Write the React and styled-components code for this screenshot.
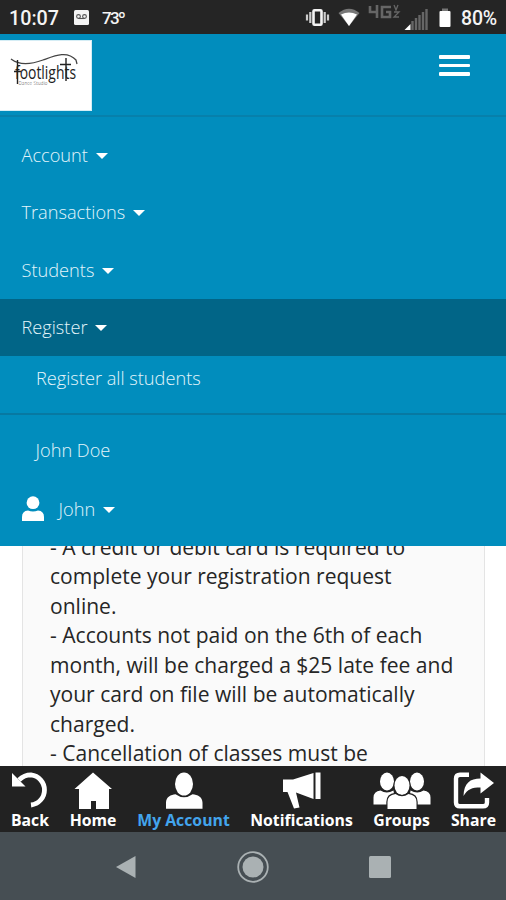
import styled, { createGlobalStyle } from "styled-components";

const GlobalStyle = createGlobalStyle`
  * {
    box-sizing: border-box;
  }

  body {
    margin: 0;
    background: #fff;
    font-family: "Open Sans", "Noto Sans", sans-serif;
  }

  svg {
    display: block;
    flex: none;
  }
`;

const Screen = styled.div`
  display: flex;
  flex-direction: column;
  width: 506px;
  height: 900px;
  overflow: hidden;
`;

const StatusBar = styled.div`
  display: flex;
  justify-content: space-between;
  flex: none;
  height: 34px;
  padding: 0 8px 0 9px;
  background: #252525;
  color: #f4f4f4;
  font-family: Roboto, sans-serif;
  font-weight: 500;
  line-height: 37px;
`;

const StatusGroup = styled.div`
  display: flex;
`;

const Clock = styled.span`
  width: 65px;
  font-size: 19.7px;
`;

const Temperature = styled.span`
  margin-left: 13px;
  font-size: 17px;
  letter-spacing: -1.7px;
`;

const Battery = styled.span`
  width: 37px;
  margin-left: 10px;
  font-size: 19.5px;
  letter-spacing: -0.2px;
`;

const Menu = styled.nav`
  flex: none;
  height: 512px;
  background: #018dbd;
  color: #e4f5fb;
  font-size: 18.2px;
  font-weight: 300;
`;

const Header = styled.div`
  display: flex;
  justify-content: space-between;
  height: 83px;
  padding: 6px 36px 0 0;
  border-bottom: 2px solid #0780ab;
`;

const Logo = styled.div`
  width: 92px;
  height: 71px;
  background: #fff;
  border: 1px solid #d5edf5;
  border-left: 0;
`;

const MenuButton = styled.button`
  display: flex;
  flex-direction: column;
  gap: 5px;
  width: 31px;
  height: 22px;
  margin-top: 15px;
  padding: 0;
  border: 0;
  background: none;

  span {
    height: 3.5px;
    border-radius: 1px;
    background: #fff;
  }
`;

const MenuList = styled.div`
  padding-top: 9px;
`;

const MenuItem = styled.div`
  display: flex;
  align-items: center;
  height: ${(props) => props.$height || 57.5}px;
  padding-left: ${(props) => props.$indent || 21.5}px;
  padding-bottom: ${(props) => props.$lift || 0}px;
  background: ${(props) => (props.$active ? "#016587" : "transparent")};
  border-bottom: ${(props) => (props.$divider ? "2px solid #0779a2" : "0")};
`;

const Caret = styled.span`
  margin: 2px 0 0 8px;
  border: 6px solid transparent;
  border-top: 6px solid #fff;
  border-bottom: 0;
`;

const UserName = styled.span`
  margin-left: 15px;
`;

const Content = styled.main`
  display: flex;
  flex: none;
  height: 220px;
  padding: 0 21px 0 22px;
  overflow: hidden;
`;

const Card = styled.div`
  flex: 1;
  padding-left: 27px;
  background: #fafafa;
  border: solid #e4e4e4;
  border-width: 0 1px;
  color: #262626;
`;

const Policy = styled.div`
  margin-top: -13.5px;
  font-size: 21.05px;
  line-height: 29.5px;
  white-space: nowrap;
`;

const TabBar = styled.nav`
  display: flex;
  flex: none;
  height: 66px;
  background: #222;
`;

const Tab = styled.div`
  display: flex;
  flex-direction: column;
  align-items: center;
  width: ${(props) => props.$width}px;
  padding-top: 5px;
  color: ${(props) => (props.$active ? "#43a5ed" : "#fff")};
  font-size: 15.8px;
  font-weight: 700;
  line-height: 20px;
  white-space: nowrap;
`;

const TabLabel = styled.span`
  margin-top: 1px;
`;

const SystemBar = styled.div`
  display: flex;
  align-items: center;
  justify-content: space-between;
  flex: none;
  height: 68px;
  padding: 1px 115px 0;
  background: #464e53;
`;

const VoicemailIcon = () => (
  <svg width="15" height="34" viewBox="0 0 15 34">
    <rect y="10" width="15" height="15" rx="1.5" fill="#f4f4f4" />
    <g fill="none" stroke="#555" strokeWidth="1.1">
      <circle cx="4.5" cy="16.5" r="1.9" />
      <circle cx="10.5" cy="16.5" r="1.9" />
      <path d="M4.5 18.5h6" />
    </g>
  </svg>
);

const SignalIcons = () => (
  <svg width="146" height="34" viewBox="305 0 146 34">
    <rect x="313.5" y="10.2" width="8" height="14.6" rx="1" fill="none" stroke="#f4f4f4" strokeWidth="2.6" />
    <path d="M310.3 12v11M324.7 12v11M307 14.5v6M328 14.5v6" stroke="#ccc" strokeWidth="2.2" />
    <path d="M338.5 13Q349 4.5 359.5 13L349 26z" fill="#777" />
    <path d="M341 14.5Q349 10.500 357 14.5L349 26z" fill="#fff" />
    <g fill="none" stroke="#666" strokeWidth="2.6">
      <path d="M370 6v6h8M377 5v13M391 7h-9v10h8v-5h-4" />
      <path d="M394 5l2 5 2-5M394 12h5l-5 5h5" strokeWidth="1.3" />
    </g>
    <path d="M404.5 30l6-6v6z" fill="#fff" />
    <path
      d="M412.5 21v9M416 18v12M419.500 15v15M423 12v18M426.500 9v21"
      stroke="#666"
      strokeWidth="2.4"
    />
    <path d="M442 8.5h6v3h-6z" fill="#777" />
    <rect x="439.5" y="11" width="11" height="16" rx="1" fill="#fff" />
  </svg>
);

const FootlightsLogo = () => (
  <svg width="91" height="69" viewBox="0 41 91 69">
    <path
      d="M11 59C20 66 32 64 43 60S67 50 76 60L77 64"
      fill="none"
      stroke="#444"
      strokeWidth="1.3"
    />
    <text
      x="15"
      y="79"
      fontFamily="Open Sans"
      fontSize="17.5"
      fontWeight="400"
      textLength="61"
      lengthAdjust="spacingAndGlyphs"
      fill="#222"
    >
      footlights
    </text>
    <path d="M17.5 60V84M14 71.5H21M66 58V81M60 64.5H71" fill="none" stroke="#222" strokeWidth="1.4" />
    <text x="18.5" y="84.8" fontFamily="Open Sans" fontSize="4.5" textLength="29" fill="#333">
      Dance Studio
    </text>
  </svg>
);

const UserIcon = () => (
  <svg width="22" height="26" viewBox="0 0 22 26">
    <circle cx="11" cy="6.7" r="6.4" fill="#fff" />
    <path d="M0 25v-4q0-6 6-6.5q5 2 10 0q6 .5 6 6.5v4z" fill="#fff" />
  </svg>
);

const BackIcon = () => (
  <svg width="40" height="38" viewBox="10 771 40 38">
    <path d="M19 780C23 776 27 774.8 31 774.8A15.2 15.2 0 0 1 31 805" fill="none" stroke="#fff" strokeWidth="4.8" />
    <path d="M12 773v13.5h13.5z" fill="#fff" />
  </svg>
);

const HomeIcon = () => (
  <svg width="40" height="38" viewBox="73 771 40 38">
    <path d="M93 772.5L112 789h-3v20H96v-8h-5v8H79v-20h-4.5z" fill="#fff" />
  </svg>
);

const AccountIcon = () => (
  <svg width="40" height="38" viewBox="163.5 771 40 38">
    <ellipse cx="183.5" cy="784" rx="9" ry="11.5" fill="#fff" />
    <path
      d="M165.500 808.700v-6c0-6 5-8 9.500-8.500q8.500 6 17 0c5 .5 10 2.500 10 8.500v6z"
      fill="#fff"
      stroke="#222"
      strokeWidth="1.500"
      paintOrder="stroke"
    />
  </svg>
);

const MegaphoneIcon = () => (
  <svg width="40" height="38" viewBox="282 771 40 38">
    <path d="M283 779.5h10L313.5 773v26L296 792.5l3.5 15-5.5 1-6.5-16.5H283z" fill="#fff" />
    <path d="M315.5 772.5h5V799h-5z" fill="#fff" />
  </svg>
);

const GroupIcon = () => (
  <svg width="60" height="38" viewBox="372 771 60 38">
    <g fill="#fff">
      <ellipse cx="387" cy="781.5" rx="7" ry="9" />
      <ellipse cx="417" cy="781.5" rx="7" ry="9" />
      <path d="M373.5 804.5v-7q0-6 7-7q6 4 13 0l2 14zM430.5 804.5v-7q0-6-7-7q-6 4-13 0l-2 14z" />
    </g>
    <g fill="#fff" stroke="#222" strokeWidth="2.4" paintOrder="stroke">
      <ellipse cx="402" cy="785.5" rx="7.5" ry="9.5" />
      <path d="M387.5 809v-7q0-7 8-8q6.5 4.5 13 0q8 1 8 8v7z" />
    </g>
  </svg>
);

const ShareIcon = () => (
  <svg width="42" height="38" viewBox="453 771 42 38">
    <path
      d="M469 774.7H460Q456 774.7 456 778.5V802.5Q456 806.3 460 806.3H483Q487 806.3 487 802.5V798"
      fill="none"
      stroke="#fff"
      strokeWidth="4.4"
    />
    <path d="M463.5 796C464 783 470 778.5 480.5 778.5V772.5L494 783L480.5 793.5V787.5C472 787.5 467.5 789 463.5 796z" fill="#fff" />
  </svg>
);

const tabs = [
  { label: "Back", width: 60, icon: BackIcon },
  { label: "Home", width: 66, icon: HomeIcon },
  { label: "My Account", width: 115, icon: AccountIcon, active: true },
  { label: "Notifications", width: 121, icon: MegaphoneIcon },
  { label: "Groups", width: 79, icon: GroupIcon },
  { label: "Share", width: 65, icon: ShareIcon },
];

const policyLines = [
  "- A credit or debit card is required to",
  "complete your registration request",
  "online.",
  "- Accounts not paid on the 6th of each",
  "month, will be charged a $25 late fee and",
  "your card on file will be automatically",
  "charged.",
  "- Cancellation of classes must be",
];

const App = () => {
  return (
    <Screen>
      <GlobalStyle />
      <StatusBar>
        <StatusGroup>
          <Clock>10:07</Clock>
          <VoicemailIcon />
          <Temperature>73º</Temperature>
        </StatusGroup>
        <StatusGroup>
          <SignalIcons />
          <Battery>80%</Battery>
        </StatusGroup>
      </StatusBar>
      <Menu>
        <Header>
          <Logo>
            <FootlightsLogo />
          </Logo>
          <MenuButton aria-label="Menu">
            <span />
            <span />
            <span />
          </MenuButton>
        </Header>
        <MenuList>
          <MenuItem>
            Account
            <Caret />
          </MenuItem>
          <MenuItem>
            Transactions
            <Caret />
          </MenuItem>
          <MenuItem>
            Students
            <Caret />
          </MenuItem>
          <MenuItem $active>
            Register
            <Caret />
          </MenuItem>
          <MenuItem $height={59} $indent={36} $lift={14} $divider>
            Register all students
          </MenuItem>
          <MenuItem $height={70} $indent={35.5}>
            John Doe
          </MenuItem>
          <MenuItem $height={47}>
            <UserIcon />
            <UserName>John</UserName>
            <Caret />
          </MenuItem>
        </MenuList>
      </Menu>
      <Content>
        <Card>
          <Policy>
            {policyLines.map((line) => (
              <div key={line}>{line}</div>
            ))}
          </Policy>
        </Card>
      </Content>
      <TabBar>
        {tabs.map(({ label, width, icon: Icon, active }) => (
          <Tab key={label} $width={width} $active={active}>
            <Icon />
            <TabLabel>{label}</TabLabel>
          </Tab>
        ))}
      </TabBar>
      <SystemBar>
        <svg width="22" height="24" viewBox="0 0 22 24">
          <path d="M1 12L20.5 1v22z" fill="#aab1b3" />
        </svg>
        <svg width="32" height="32" viewBox="0 0 32 32">
          <circle cx="16" cy="16" r="14.8" fill="none" stroke="#aab1b3" strokeWidth="1.8" />
          <circle cx="16" cy="16" r="10.5" fill="#aab1b3" />
        </svg>
        <svg width="22" height="22" viewBox="0 0 22 22">
          <rect width="22" height="22" rx="1.5" fill="#aab1b3" />
        </svg>
      </SystemBar>
    </Screen>
  );
};

export default App;
